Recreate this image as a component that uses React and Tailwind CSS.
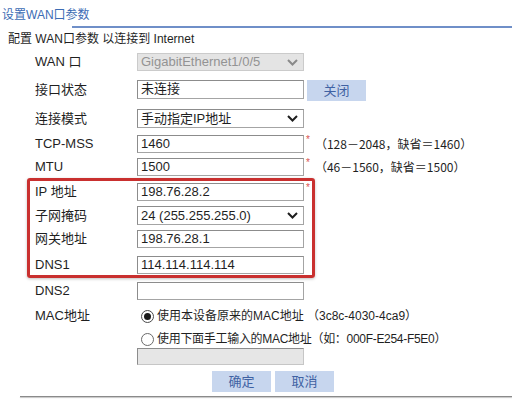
import React from "react";

function Chevron({ color = "#222" }) {
  return (
    <svg width="11" height="7" viewBox="0 0 11 7" className="shrink-0">
      <polyline points="1,1 5.5,5.5 10,1" fill="none" stroke={color} strokeWidth="2" />
    </svg>
  );
}

function Label({ children, w = "w-[137px]", pl = "pl-[35px]" }) {
  return <div className={`${w} ${pl} shrink-0 leading-[18px]`}>{children}</div>;
}

function Input({ value, h = "h-[18px]", gray = false }) {
  return (
    <div
      className={`w-[167px] ${h} shrink-0 border border-[#a4a4a4] border-t-[#8c8c8c] border-l-[#8c8c8c] pl-[3px] leading-[16px] ${
        gray ? "bg-[#e6e6e6] border-[#c6c6c6]" : "bg-white"
      }`}
    >
      {value}
    </div>
  );
}

function Select({ value, disabled = false, h = "h-[19px]" }) {
  return (
    <div
      className={`w-[167px] ${h} shrink-0 flex items-center justify-between pl-[3px] pr-[5px] border ${
        disabled
          ? "bg-[#e4e4e4] border-[#cbcbcb] text-[#939393]"
          : "bg-white border-[#a4a4a4] border-t-[#8c8c8c] border-l-[#8c8c8c]"
      }`}
    >
      <span className="leading-[16px]">{value}</span>
      <Chevron color={disabled ? "#8a8a8a" : "#1e1e1e"} />
    </div>
  );
}

function Star() {
  return <span className="self-start ml-[2px] -mt-[1px] text-[10px] leading-[12px] text-[#d9534f]">*</span>;
}

function Btn({ children }) {
  return (
    <div className="w-[59px] h-[21px] bg-[#c7d6ee] text-[#3f62a3] flex items-center justify-center leading-[21px]">
      {children}
    </div>
  );
}

export default function App() {
  return (
    <div className="w-[512px] h-[400px] bg-white overflow-hidden text-[13px] text-[#1f1f1f] font-['Liberation_Sans','Noto_Sans_CJK_SC',sans-serif]">
      {/* title */}
      <div className="h-[26px] pl-[2px] pt-[7px] text-[12px] leading-[16px] text-[#3c6cb4]">设置WAN口参数</div>
      <div className="ml-[72px] h-[2px] bg-[#6f8fc8]"></div>
      <div className="h-[22px] leading-[22px] pl-[8px] text-[12px]">配置 WAN口参数 以连接到 Internet</div>

      {/* WAN */}
      <div className="mt-[3px] h-[18px] flex items-center">
        <Label>WAN 口</Label>
        <Select value="GigabitEthernet1/0/5" disabled h="h-[18px]" />
      </div>
      {/* 接口状态 */}
      <div className="mt-[9px] h-[19px] flex items-center">
        <Label>接口状态</Label>
        <Input value="未连接" h="h-[19px]" />
        <div className="self-start ml-[3px]">
          <Btn>关闭</Btn>
        </div>
      </div>
      {/* 连接模式 */}
      <div className="mt-[10px] h-[19px] flex items-center">
        <Label>连接模式</Label>
        <Select value="手动指定IP地址" />
      </div>
      {/* TCP-MSS */}
      <div className="mt-[7px] h-[18px] flex items-center">
        <Label>TCP-MSS</Label>
        <Input value="1460" />
        <Star />
        <span className="ml-[5px] leading-[18px] font-['Noto_Sans_CJK_SC',sans-serif] text-[12px]">（128－2048，缺省＝1460）</span>
      </div>
      {/* MTU */}
      <div className="mt-[5px] h-[18px] flex items-center">
        <Label>MTU</Label>
        <Input value="1500" />
        <Star />
        <span className="ml-[5px] leading-[18px] font-['Noto_Sans_CJK_SC',sans-serif] text-[12px]">（46－1560，缺省＝1500）</span>
      </div>

      {/* red box */}
      <div className="mt-[2px] ml-[27px] w-[288px] border-[3px] border-[#c9302f] rounded-[3px] pb-[1px] shadow-[0_1px_3px_rgba(0,0,0,0.25)]">
        <div className="mt-[2px] h-[18px] flex items-center">
          <Label w="w-[107px]" pl="pl-[5px]">IP 地址</Label>
          <Input value="198.76.28.2" />
          <Star />
        </div>
        <div className="mt-[5px] h-[19px] flex items-center">
          <Label w="w-[107px]" pl="pl-[5px]">子网掩码</Label>
          <Select value="24 (255.255.255.0)" />
        </div>
        <div className="mt-[5px] h-[18px] flex items-center">
          <Label w="w-[107px]" pl="pl-[5px]">网关地址</Label>
          <Input value="198.76.28.1" />
        </div>
        <div className="mt-[8px] h-[18px] flex items-center">
          <Label w="w-[107px]" pl="pl-[5px]">DNS1</Label>
          <Input value="114.114.114.114" />
        </div>
      </div>

      {/* DNS2 */}
      <div className="mt-[4px] h-[18px] flex items-center">
        <Label>DNS2</Label>
        <Input value="" />
      </div>

      {/* MAC */}
      <div className="mt-[7px] flex">
        <Label>MAC地址</Label>
        <div className="flex flex-col">
          <div className="h-[18px] flex items-center pl-[4px]">
            <span className="w-[13px] h-[13px] rounded-full border border-[#4a4a4a] flex items-center justify-center bg-white">
              <span className="w-[7px] h-[7px] rounded-full bg-[#1a1a1a]"></span>
            </span>
            <span className="ml-[3px] leading-[18px] text-[12px]">使用本设备原来的MAC地址 （3c8c-4030-4ca9）</span>
          </div>
          <div className="mt-[6px] h-[16px] flex items-center pl-[4px]">
            <span className="w-[13px] h-[13px] rounded-full border border-[#6a6a6a] bg-white"></span>
            <span className="ml-[3px] leading-[16px] text-[12px] tracking-[-0.3px]">使用下面手工输入的MAC地址（如：000F-E254-F5E0）</span>
          </div>
          <div className="mt-[1px]">
            <Input value="" h="h-[17px]" gray />
          </div>
        </div>
      </div>

      {/* buttons */}
      <div className="mt-[6px] ml-[212px] flex gap-[4px]">
        <Btn>确定</Btn>
        <Btn>取消</Btn>
      </div>
      <div className="mt-[4px] ml-[20px] h-[1px] bg-[#8a8a8a] shadow-[0_1px_1px_rgba(0,0,0,0.25)]"></div>
    </div>
  );
}
